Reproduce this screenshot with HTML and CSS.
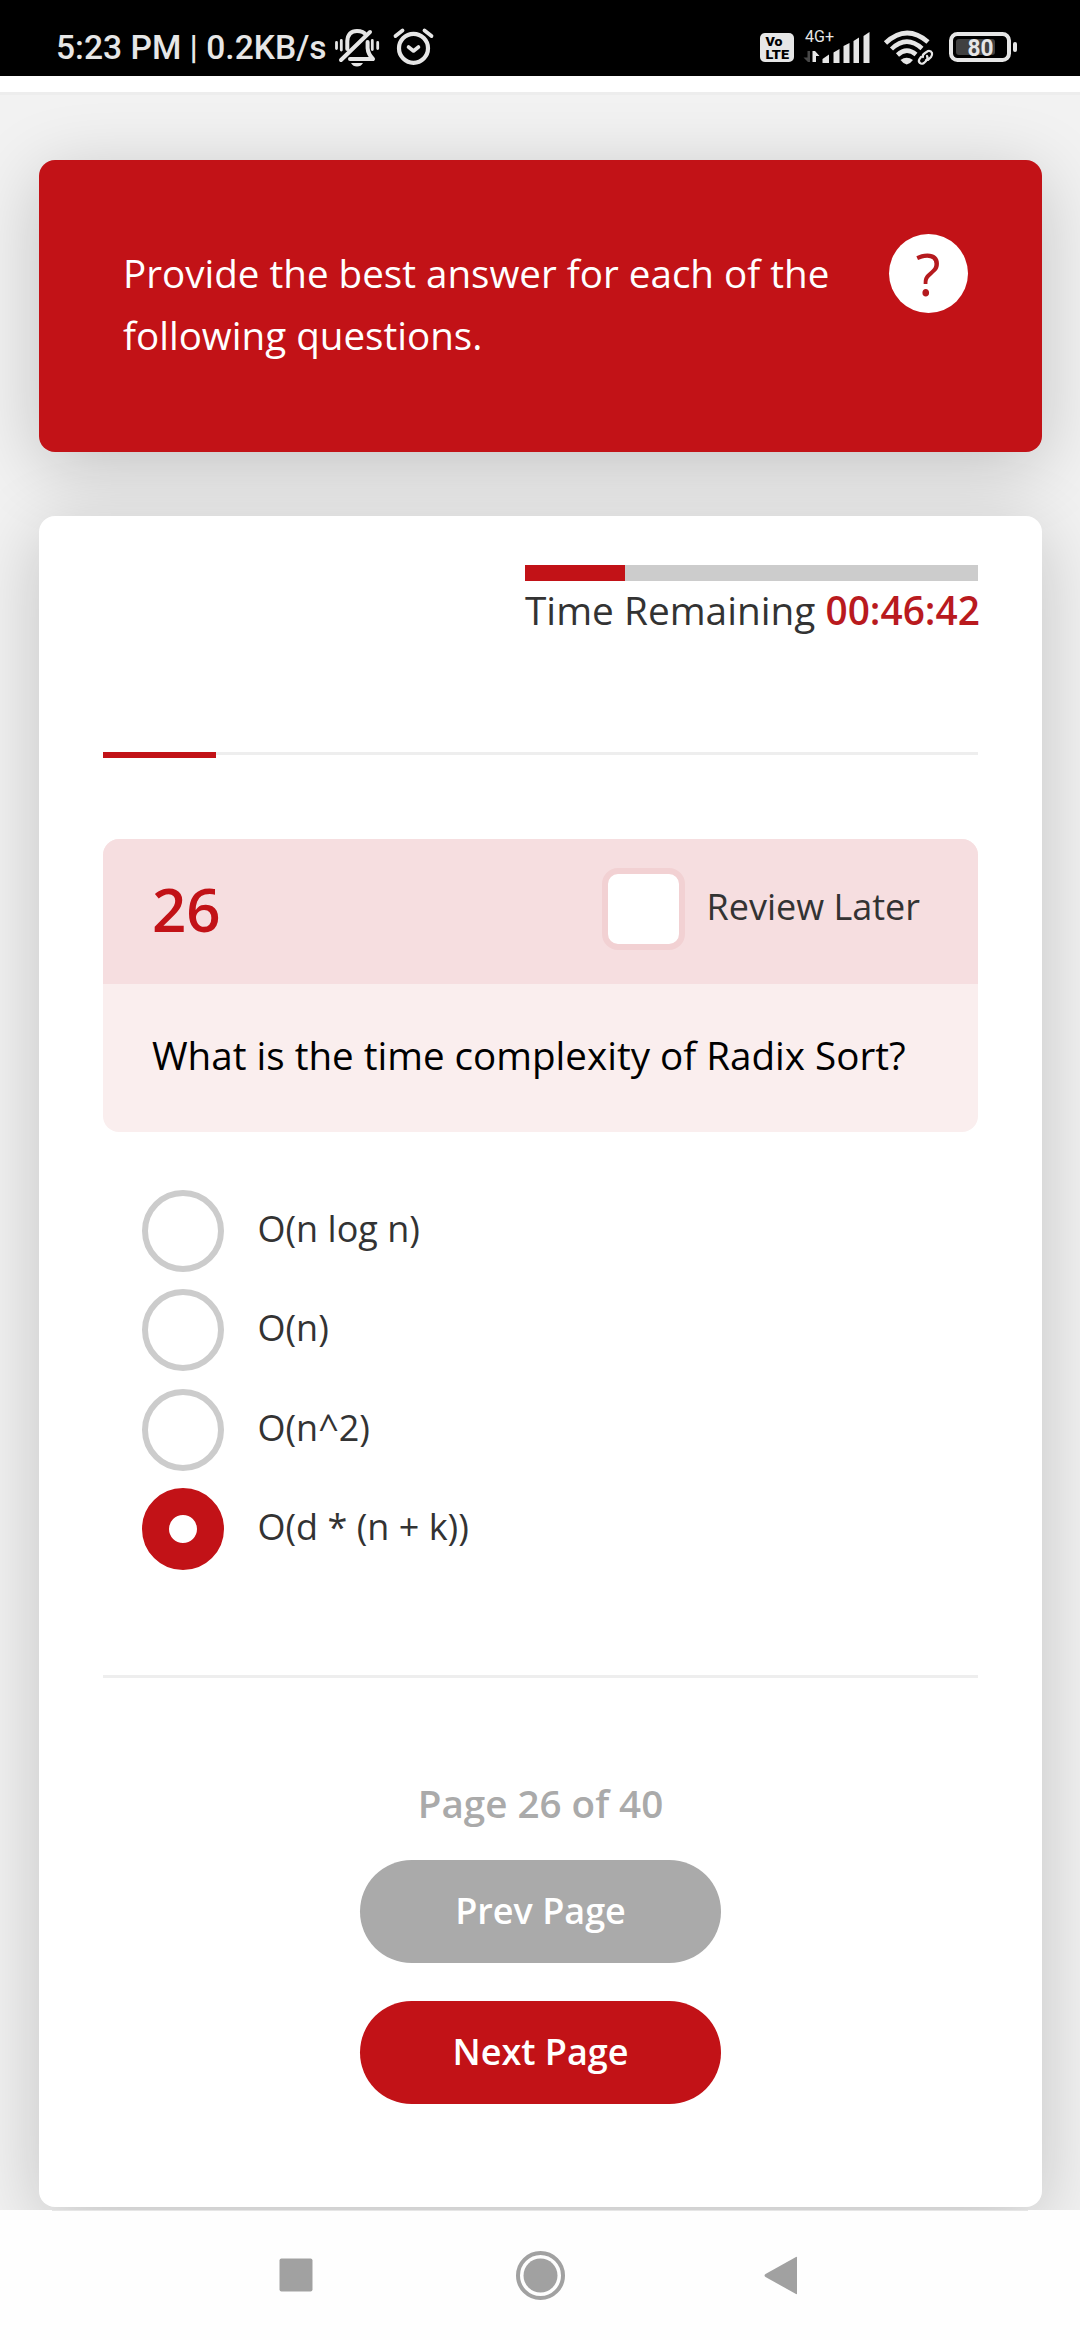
FILE: index.html
```html
<!DOCTYPE html>
<html lang="en">
<head>
<meta charset="utf-8">
<title>Quiz</title>
<link rel="stylesheet" href="styles.css">
</head>
<body>
<header class="status-bar">
  <span class="status-clock">5:23 PM | 0.2KB/s</span>
  <svg class="status-left" width="106" height="76" viewBox="332 0 106 76" fill="none" stroke="#e6e6e6" stroke-linecap="round">
    <path d="M347.300 49V41Q348 31 357 31Q363.500 31 366 35M367.600 42V48Q368 54 373 59H350" stroke-width="4" stroke-linejoin="round"/>
    <path d="M341 60L370 32" stroke-width="4"/>
    <path d="M351 63H363Q361 66.500 357 66.500T351 63Z" fill="#e6e6e6" stroke="none"/>
    <path d="M336.500 42.500V48.500M341.300 40.500V50M372.300 40.500V49.500M377.700 42.500V48.500" stroke-width="2.800"/>
    <circle cx="413.500" cy="48.300" r="14.500" stroke-width="4.200"/>
    <path d="M395.500 36L402.500 30.500M424.500 30.500L431.500 36" stroke-width="3.800"/>
    <path d="M408.500 47L413.500 51L418.500 47" stroke-width="3.600" stroke-linejoin="round"/>
  </svg>
  <svg class="status-right" width="264" height="76" viewBox="756 0 264 76">
    <rect x="760" y="33" width="34" height="29" rx="5" fill="#e6e6e6"/>
    <text class="volte" x="765.500" y="46" textLength="17" lengthAdjust="spacingAndGlyphs">Vo</text>
    <text class="volte" x="765.500" y="58.500" textLength="23.500" lengthAdjust="spacingAndGlyphs">LTE</text>
    <text class="network" x="805" y="42" textLength="29" lengthAdjust="spacingAndGlyphs">4G+</text>
    <path d="M807.500 51H810V62H808L803.500 57.500H807.500Z" fill="#484848"/>
    <path d="M812.500 51H815L819.500 56H816V62H812.500Z" fill="#e6e6e6"/>
    <g fill="#e6e6e6">
      <path d="M822.500 63V59L829 54.500V63ZM833.500 63V52.500L839.500 49V63ZM843.500 63V46L849.500 43V63ZM853.500 63V41L859 37.500V63ZM863.500 63V36L869.500 32V63Z"/>
      <path d="M900.500 60Q906.500 55.500 913 60Q911 63 906.700 64.500Q902.500 63 900.500 60Z"/>
    </g>
    <g fill="none" stroke="#e6e6e6">
      <path d="M885.500 43Q906.500 23.500 928 42" stroke-width="4.800"/>
      <path d="M891.500 49Q906.500 34.500 922 48.500" stroke-width="4.500"/>
      <path d="M897.500 55Q906.500 46.500 916 54.500" stroke-width="4.500"/>
    </g>
    <g fill="none" stroke="#e6e6e6" stroke-width="2.200" stroke-linecap="round">
      <path d="M923 57Q922 55 925 53L928 51Q931 50.500 932 53Q932.500 55 931 57L928 60H926M927 56Q928.500 58 926 61L924 63Q921.500 64.500 920 63Q918 61.500 919.500 59L921 57"/>
    </g>
    <rect x="951" y="34" width="58" height="26" rx="6.500" fill="none" stroke="#e6e6e6" stroke-width="4"/>
    <rect x="956" y="39" width="39" height="16" rx="3" fill="#404040"/>
    <rect x="1013" y="42" width="4" height="10" rx="2" fill="#e6e6e6"/>
    <text class="battery-level" x="967.500" y="56" textLength="26" lengthAdjust="spacingAndGlyphs">80</text>
  </svg>
</header>

<main class="page">
  <section class="instructions">
    <p class="instructions-text">Provide the best answer for each of the following questions.</p>
    <span class="help">?</span>
  </section>

  <section class="quiz">
    <div class="timer">
      <div class="timer-track"><div class="timer-fill"></div></div>
      <p class="timer-text">Time Remaining <strong>00:46:42</strong></p>
    </div>

    <div class="progress"><div class="progress-fill"></div></div>

    <article class="question">
      <header class="question-head">
        <span class="question-number">26</span>
        <label class="review"><span class="checkbox"></span><span class="review-text">Review Later</span></label>
      </header>
      <p class="question-text">What is the time complexity of Radix Sort?</p>
    </article>

    <ul class="options">
      <li class="option"><span class="radio"></span><span class="option-text">O(n log n)</span></li>
      <li class="option"><span class="radio"></span><span class="option-text">O(n)</span></li>
      <li class="option"><span class="radio"></span><span class="option-text">O(n^2)</span></li>
      <li class="option"><span class="radio radio-on"></span><span class="option-text">O(d * (n + k))</span></li>
    </ul>

    <footer class="pager">
      <p class="pager-text">Page 26 of 40</p>
      <div class="button button-prev">Prev Page</div>
      <div class="button button-next">Next Page</div>
    </footer>
  </section>
</main>

<nav class="nav-bar">
  <svg width="1080" height="130" viewBox="0 2210 1080 130">
    <rect x="52" y="2210" width="976" height="1" fill="#e6e6e6"/>
    <g fill="#a1a1a1">
      <rect x="279.500" y="2258.500" width="33" height="33" rx="2"/>
      <circle cx="540.500" cy="2275.500" r="17"/>
      <path d="M797 2257.500V2293.500Q797 2294.500 796 2294L765.500 2277Q763.500 2275.500 765.500 2274L796 2257Q797 2256.500 797 2257.500Z"/>
    </g>
    <circle cx="540.500" cy="2275.500" r="22.500" fill="none" stroke="#a1a1a1" stroke-width="4"/>
  </svg>
</nav>
</body>
</html>
```

FILE: styles.css
```css
* { box-sizing: border-box; }

body {
  margin: 0;
  width: 1080px;
  height: 2340px;
  overflow: hidden;
  display: flex;
  flex-direction: column;
  background: #fff;
  color: #333;
  font-family: "Open Sans", sans-serif;
  font-size: 38.6px;
}

p, ul { margin: 0; padding: 0; }

/* System status bar */
.status-bar {
  display: flex;
  flex: none;
  height: 76px;
  margin-bottom: 16px;
  padding-left: 56px;
  background: #000;
  color: #e6e6e6;
  font-family: Roboto, sans-serif;
}
.status-clock {
  width: 276px;
  font-size: 33.6px;
  font-weight: 500;
  line-height: 96px;
  white-space: nowrap;
}
.status-right { margin-left: auto; margin-right: 60px; }
.volte { font: 900 12px Roboto, sans-serif; fill: #000; }
.network { font: 400 16px Roboto, sans-serif; fill: #e6e6e6; }
.battery-level { font: 700 23px Roboto, sans-serif; fill: #e6e6e6; }

/* Scrolled page area */
.page {
  flex: none;
  height: 2118px;
  padding: 65px 38px 0 39px;
  overflow: hidden;
  border-top: 3px solid #ededed;
  background: #f2f2f2;
}

.instructions {
  display: flex;
  align-items: flex-start;
  height: 292px;
  padding: 74px 74.5px 0 84px;
  border-radius: 16px;
  background: #c21217;
  color: #fff;
  box-shadow: 0 15px 75px rgba(0, 0, 0, .2);
}
.instructions-text {
  width: 720px;
  padding-top: 8px;
  line-height: 62px;
}
.help {
  width: 79px;
  height: 79px;
  margin-left: auto;
  border-radius: 50%;
  background: #fff;
  color: #b51a1e;
  font-size: 58px;
  font-weight: 500;
  line-height: 79px;
  text-align: center;
}

.quiz {
  height: 1691px;
  margin-top: 64px;
  padding: 49px 64px 0;
  border-radius: 16px;
  background: #fff;
  box-shadow: 0 15px 75px rgba(0, 0, 0, .2);
}

.timer { width: 453px; height: 187px; margin-left: auto; }
.timer-track { height: 16px; background: #ccc; }
.timer-fill { width: 100px; height: 16px; background: #c21217; }
.timer-text { font-size: 38.8px; line-height: 58px; white-space: nowrap; }
.timer-text strong { color: #b91a1e; font-weight: 600; }

.progress { height: 87px; border-top: 3px solid #eee; }
.progress-fill {
  width: 113px;
  height: 6px;
  margin-top: -3px;
  background: #c21217;
}

.question {
  overflow: hidden;
  border-radius: 16px;
  background: #faeeee;
}
.question-head {
  display: flex;
  align-items: flex-start;
  justify-content: space-between;
  height: 145px;
  padding: 29px 58px 0 49px;
  background: #f6dee0;
}
.question-number {
  color: #c21217;
  font-size: 60px;
  font-weight: 600;
  line-height: 82px;
}
.review { display: flex; gap: 21px; font-size: 36px; line-height: 78px; }
.checkbox {
  width: 83px;
  height: 82px;
  border: 6px solid #f2d1d3;
  border-radius: 16px;
  background: #fff;
}
.question-text {
  height: 148px;
  padding-left: 49px;
  color: #000;
  line-height: 143px;
}

.options {
  display: flex;
  flex-direction: column;
  gap: 17.330px;
  height: 546px;
  padding: 58px 0 0 39px;
  border-bottom: 3px solid #eee;
  list-style: none;
}
.option { display: flex; gap: 33.5px; height: 82px; font-size: 36px; line-height: 78px; }
.radio {
  width: 82px;
  height: 82px;
  border: 6px solid #ccc;
  border-radius: 50%;
}
.radio-on { border: 27px solid #c21217; }

.pager {
  display: flex;
  flex-direction: column;
  align-items: center;
  padding-top: 95px;
  font-weight: 600;
}
.pager-text { height: 87px; color: #aaa; line-height: 60px; }
.button {
  width: 361px;
  height: 103px;
  border-radius: 52px;
  color: #fff;
  font-size: 36px;
  line-height: 101px;
  text-align: center;
}
.button-prev { background: #aaa; }
.button-next { margin-top: 38px; background: #c21217; }

/* System navigation bar */
.nav-bar { flex: none; height: 130px; background: #fefefe; }
.nav-bar svg { display: block; }
```
